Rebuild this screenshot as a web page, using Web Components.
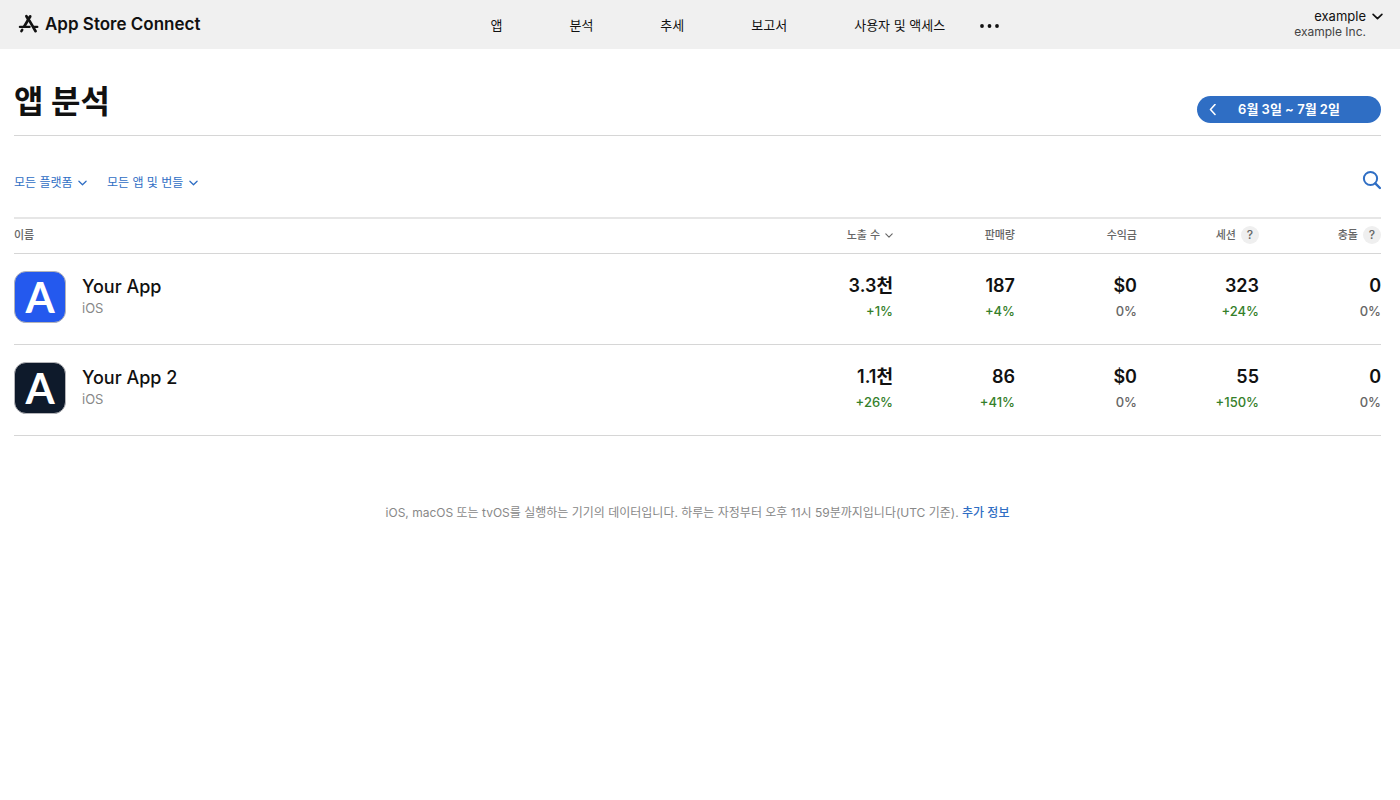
<!DOCTYPE html>
<html lang="ko">
<head>
<meta charset="utf-8">
<meta name="viewport" content="width=device-width, initial-scale=1">
<title>App Store Connect</title>
<style>
  :root {
    --blue: #2f6ec4;
    --ink: #111;
    --muted: #666;
    --line: #d6d6d6;
    --green: #35802a;
  }
  body {
    margin: 0;
    background: #fff;
    color: var(--ink);
    font-family: Inter, "Noto Sans CJK KR", sans-serif;
    font-size: 13px;
    line-height: 20px;
  }
  main {
    padding: 0 19px 0 14px;
  }
</style>
</head>
<body>
<site-header>
  <nav-link href="#apps">앱</nav-link>
  <nav-link href="#analytics">분석</nav-link>
  <nav-link href="#trends">추세</nav-link>
  <nav-link href="#reports">보고서</nav-link>
  <nav-link href="#users">사용자 및 액세스</nav-link>
  <account-menu slot="account" name="example" org="example Inc."></account-menu>
</site-header>
<main>
  <page-title>
    앱 분석
    <date-range slot="actions">6월 3일 ~ 7월 2일</date-range>
  </page-title>
  <filter-bar>
    <filter-select label="플랫폼" value="모든 플랫폼"></filter-select>
    <filter-select label="앱" value="모든 앱 및 번들"></filter-select>
  </filter-bar>
  <app-table></app-table>
</main>
<page-note>iOS, macOS 또는 tvOS를 실행하는 기기의 데이터입니다. 하루는 자정부터 오후 11시 59분까지입니다(UTC 기준).</page-note>

<script>
const reset = `
  * { box-sizing: border-box; }
  button, select {
    margin: 0;
    padding: 0;
    border: 0;
    background: none;
    color: inherit;
    font: inherit;
    cursor: pointer;
  }
  a { color: inherit; text-decoration: none; }
  svg { display: block; flex: none; }
`;

const chevron = (w, h, stroke) => `
  <svg class="chevron" width="${w}" height="${h}" viewBox="0 0 10 6" fill="none" stroke="currentColor"
    stroke-width="${stroke}" stroke-linecap="round" stroke-linejoin="round" aria-hidden="true">
    <path d="M1 1l4 4 4-4"/>
  </svg>`;

class SiteHeader extends HTMLElement {
  constructor() {
    super();
    this.attachShadow({ mode: 'open' });
    this.shadowRoot.innerHTML = `
      <style>
        ${reset}
        :host { display: block; background: #f0f0f0; }
        header {
          display: flex;
          align-items: center;
          justify-content: space-between;
          min-height: 49px;
          padding: 0 17px 0 18px;
        }
        .brand {
          display: flex;
          align-items: center;
          gap: 6px;
          padding-bottom: 2px;
          font-size: 17px;
          font-weight: 600;
          white-space: nowrap;
        }
        nav {
          display: flex;
          align-items: center;
          gap: 67px;
          padding: 1px 5px 0 0;
        }
        .more {
          margin-left: -32px;
          padding: 10px 0 8px;
        }
      </style>
      <header>
        <a class="brand" href="#home">
          <svg width="21" height="20" viewBox="0 0 21 20" fill="none" stroke="currentColor" aria-hidden="true">
            <path d="M12.3 2.2L5.9 13" stroke-width="2.7"/>
            <path d="M8.4 2.2l1.8 3M11.4 6.6l6.2 10.6" stroke-width="2.7" stroke-linecap="round"/>
            <path d="M4.2 15.8l-.8 1.4M12.3 2.2l-.4.6" stroke-width="2.5" stroke-linecap="round"/>
            <path d="M1.9 12.9h9.7M16.1 12.9h3.2" stroke-width="2.3" stroke-linecap="round"/>
          </svg>
          App Store Connect
        </a>
        <nav aria-label="App Store Connect">
          <slot></slot>
          <button class="more" type="button" aria-label="더 보기">
            <svg width="19" height="4" viewBox="0 0 19 4" fill="currentColor" aria-hidden="true">
              <circle cx="2" cy="2" r="1.9"/><circle cx="9.5" cy="2" r="1.9"/><circle cx="17" cy="2" r="1.9"/>
            </svg>
          </button>
        </nav>
        <slot name="account"></slot>
      </header>
    `;
  }
}

class NavLink extends HTMLElement {
  constructor() {
    super();
    this.attachShadow({ mode: 'open' });
    this.shadowRoot.innerHTML = `
      <style>
        ${reset}
        :host { display: block; white-space: nowrap; }
      </style>
      <a href="${this.getAttribute('href')}"><slot></slot></a>
    `;
  }
}

class AccountMenu extends HTMLElement {
  constructor() {
    super();
    this.attachShadow({ mode: 'open' });
    this.shadowRoot.innerHTML = `
      <style>
        ${reset}
        :host { display: block; }
        button {
          display: flex;
          align-items: flex-start;
          gap: 6px;
          padding-bottom: 1px;
          text-align: right;
          line-height: 16px;
        }
        .name { display: block; font-size: 13px; }
        .org { display: block; font-size: 12px; color: #444; }
        .chevron { margin-top: 5px; }
      </style>
      <button type="button" aria-haspopup="menu">
        <span>
          <span class="name">${this.getAttribute('name')}</span>
          <span class="org">${this.getAttribute('org')}</span>
        </span>
        ${chevron(11, 7, 1.5)}
      </button>
    `;
  }
}

class PageTitle extends HTMLElement {
  constructor() {
    super();
    this.attachShadow({ mode: 'open' });
    this.shadowRoot.innerHTML = `
      <style>
        ${reset}
        :host {
          display: flex;
          align-items: flex-end;
          justify-content: space-between;
          padding: 32px 0 12px;
          border-bottom: 1px solid var(--line);
        }
        h1 {
          margin: 0;
          font-size: 32px;
          font-weight: 700;
          line-height: 42px;
        }
      </style>
      <h1><slot></slot></h1>
      <slot name="actions"></slot>
    `;
  }
}

class DateRange extends HTMLElement {
  constructor() {
    super();
    this.attachShadow({ mode: 'open' });
    this.shadowRoot.innerHTML = `
      <style>
        ${reset}
        :host {
          display: flex;
          align-items: center;
          width: 184px;
          border-radius: 14px;
          background: var(--blue);
          color: #fff;
          font-size: 13px;
          font-weight: 600;
          line-height: 27px;
        }
        .prev { padding: 0 12px; }
        .range { flex: 1; padding-right: 32px; white-space: nowrap; }
      </style>
      <button class="prev" type="button" aria-label="이전 기간">
        <svg width="8" height="12" viewBox="0 0 8 12" fill="none" stroke="currentColor" stroke-width="1.6" stroke-linecap="round" stroke-linejoin="round" aria-hidden="true">
          <path d="M6 .5L1.5 5.5 6 10.5"/>
        </svg>
      </button>
      <button class="range" type="button"><slot></slot></button>
    `;
  }
}

class FilterBar extends HTMLElement {
  constructor() {
    super();
    this.attachShadow({ mode: 'open' });
    this.shadowRoot.innerHTML = `
      <style>
        ${reset}
        :host {
          display: flex;
          align-items: flex-start;
          justify-content: space-between;
          padding: 34px 0 24px;
          color: var(--blue);
        }
        .filters { display: flex; gap: 20px; padding-top: 3px; }
      </style>
      <div class="filters"><slot></slot></div>
      <button type="button" aria-label="검색">
        <svg width="19" height="20" viewBox="0 0 19 20" fill="none" stroke="currentColor" stroke-width="2" stroke-linecap="round" aria-hidden="true">
          <circle cx="8.5" cy="8.5" r="6.6"/>
          <path d="M13.3 13.4l4.6 4.6" stroke-width="2.4"/>
        </svg>
      </button>
    `;
  }
}

class FilterSelect extends HTMLElement {
  constructor() {
    super();
    this.attachShadow({ mode: 'open' });
    this.shadowRoot.innerHTML = `
      <style>
        ${reset}
        :host { display: block; font-size: 12px; }
        .field { display: grid; align-items: center; }
        select {
          grid-area: 1 / 1;
          appearance: none;
          padding-right: 14px;
          line-height: 20px;
        }
        .chevron {
          grid-area: 1 / 1;
          justify-self: end;
          pointer-events: none;
        }
      </style>
      <div class="field">
        <select aria-label="${this.getAttribute('label')}">
          <option>${this.getAttribute('value')}</option>
        </select>
        ${chevron(9, 6, 1.4)}
      </div>
    `;
  }
}

class HelpBadge extends HTMLElement {
  constructor() {
    super();
    this.attachShadow({ mode: 'open' });
    this.shadowRoot.innerHTML = `
      <style>
        ${reset}
        :host { display: block; }
        button {
          display: block;
          width: 18px;
          height: 18px;
          border-radius: 50%;
          background: #efefef;
          font-size: 12px;
          font-weight: 500;
          line-height: 18px;
          text-align: center;
        }
      </style>
      <button type="button">?</button>
    `;
  }
}

class AppIcon extends HTMLElement {
  constructor() {
    super();
    this.attachShadow({ mode: 'open' });
    this.shadowRoot.innerHTML = `
      <style>
        ${reset}
        :host {
          display: block;
          box-sizing: border-box;
          width: 52px;
          height: 52px;
          border: 1px solid #b4b4b8;
          border-radius: 12px;
          background: ${this.getAttribute('color')};
          color: #fff;
          font-family: Lato, Inter, sans-serif;
          font-size: 42px;
          font-weight: 700;
          line-height: 50px;
          text-align: center;
        }
      </style>
      <slot></slot>
    `;
  }
}

const columns = [
  { title: '노출 수', sorted: true },
  { title: '판매량' },
  { title: '수익금' },
  { title: '세션', help: true },
  { title: '충돌', help: true },
];

const apps = [
  {
    name: 'Your App', platform: 'iOS', color: '#2459ee',
    stats: [['3.3천', '+1%'], ['187', '+4%'], ['$0', '0%'], ['323', '+24%'], ['0', '0%']],
  },
  {
    name: 'Your App 2', platform: 'iOS', color: '#0e1a2b',
    stats: [['1.1천', '+26%'], ['86', '+41%'], ['$0', '0%'], ['55', '+150%'], ['0', '0%']],
  },
];

class AppTable extends HTMLElement {
  constructor() {
    super();
    this.attachShadow({ mode: 'open' });
    this.shadowRoot.innerHTML = `
      <style>
        ${reset}
        :host { display: block; }
        table {
          width: 100%;
          border-collapse: separate;
          border-spacing: 0;
          border-top: 2px solid #e6e6e6;
          table-layout: fixed;
        }
        th, td {
          padding: 0;
          border-bottom: 1px solid var(--line);
          text-align: right;
        }
        th:first-child, td:first-child { text-align: left; }
        thead th {
          height: 35px;
          padding-bottom: 2px;
          color: var(--muted);
          font-size: 11px;
          font-weight: 500;
          line-height: 18px;
        }
        .stat { width: 122px; }
        .head {
          display: flex;
          align-items: center;
          justify-content: flex-end;
          gap: 5px;
        }
        tbody td { height: 91px; vertical-align: top; }
        .app {
          display: flex;
          gap: 16px;
          padding-top: 17px;
        }
        .name {
          display: block;
          padding-top: 5px;
          font-size: 18px;
          font-weight: 500;
          line-height: 22px;
        }
        .platform {
          display: block;
          color: #888;
          font-size: 13px;
          line-height: 20px;
        }
        .value {
          display: block;
          padding-top: 19px;
          font-size: 18px;
          font-weight: 600;
          line-height: 26px;
        }
        .change {
          display: block;
          color: var(--muted);
          font-size: 13px;
          font-weight: 500;
          line-height: 24px;
        }
        .up { color: var(--green); }
      </style>
      <table>
        <thead>
          <tr>
            <th scope="col">이름</th>
            ${columns.map(c => this.headCell(c)).join('')}
          </tr>
        </thead>
        <tbody>${apps.map(a => this.row(a)).join('')}</tbody>
      </table>
    `;
  }

  headCell(column) {
    if (column.sorted) {
      return `<th class="stat" scope="col" aria-sort="descending">
        <div class="head"><button class="head" type="button">${column.title} ${chevron(8, 5, 1.4)}</button></div>
      </th>`;
    }
    return `<th class="stat" scope="col">
      <div class="head">${column.title}${column.help ? '<help-badge></help-badge>' : ''}</div>
    </th>`;
  }

  row(app) {
    const stats = app.stats.map(([value, change]) => `
      <td>
        <span class="value">${value}</span>
        <span class="change ${change.startsWith('+') ? 'up' : ''}">${change}</span>
      </td>`).join('');
    return `
      <tr>
        <td>
          <div class="app">
            <app-icon color="${app.color}">A</app-icon>
            <div>
              <a class="name" href="#app">${app.name}</a>
              <span class="platform">${app.platform}</span>
            </div>
          </div>
        </td>
        ${stats}
      </tr>`;
  }
}

class PageNote extends HTMLElement {
  constructor() {
    super();
    this.attachShadow({ mode: 'open' });
    this.shadowRoot.innerHTML = `
      <style>
        ${reset}
        :host { display: block; padding: 67px 19px 32px 14px; }
        p {
          margin: 0;
          color: #888;
          font-size: 12px;
          text-align: center;
        }
        a { color: var(--blue); font-weight: 500; }
      </style>
      <p><slot></slot> <a href="#more">추가 정보</a></p>
    `;
  }
}

customElements.define('site-header', SiteHeader);
customElements.define('nav-link', NavLink);
customElements.define('account-menu', AccountMenu);
customElements.define('page-title', PageTitle);
customElements.define('date-range', DateRange);
customElements.define('filter-bar', FilterBar);
customElements.define('filter-select', FilterSelect);
customElements.define('help-badge', HelpBadge);
customElements.define('app-icon', AppIcon);
customElements.define('app-table', AppTable);
customElements.define('page-note', PageNote);
</script>
</body>
</html>
